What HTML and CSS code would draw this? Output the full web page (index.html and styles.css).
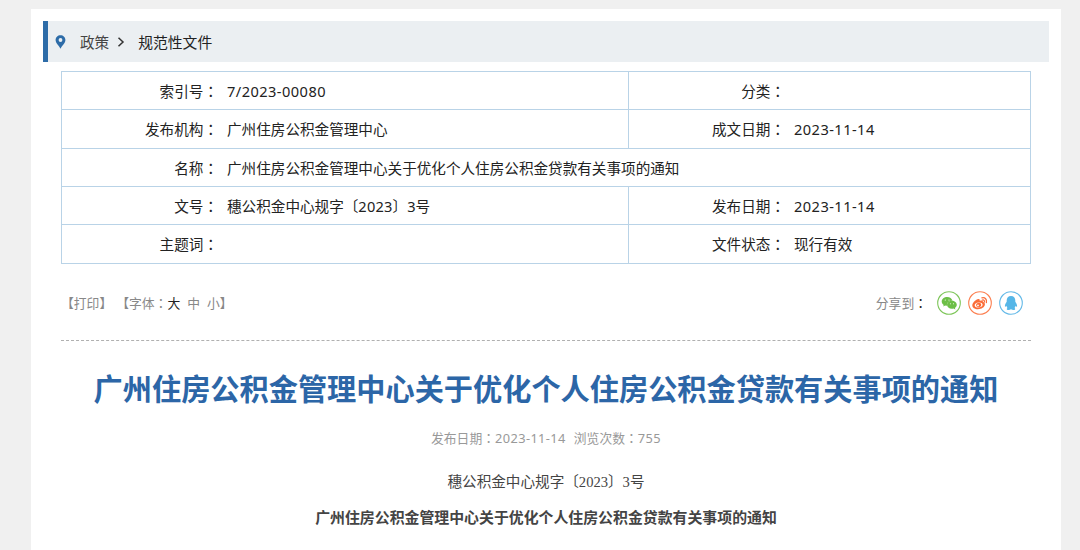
FILE: index.html
```
<!DOCTYPE html>
<html lang="zh-CN">
<head>
    <meta charset="UTF-8">
    <title>广州住房公积金管理中心关于优化个人住房公积金贷款有关事项的通知</title>
    <meta name="viewport" content="width=device-width, initial-scale=1.0">
    <link rel="stylesheet" href="styles.css">
</head>
<body>
    <div class="container">
        <div class="crumb">
            <svg class="pin" viewBox="0 0 10 14" width="11" height="14">
                <path fill="#2d6ca8" fill-rule="evenodd" d="M5 .3C2.200.3.1 2.400.1 5.100c0 3 3.100 5.400 4.900 8.600 1.800-3.200 4.900-5.600 4.900-8.600C9.900 2.400 7.800.3 5 .3zM5 3.100a1.900 1.900 0 1 1 0 3.800 1.900 1.900 0 0 1 0-3.800z"/>
            </svg>
            <a class="crumb-parent">政策</a>
            <svg class="arrow" viewBox="0 0 8 10" width="8" height="10">
                <path d="M1.500.8 6 5 1.500 9.200" fill="none" stroke="#333" stroke-width="1.500"/>
            </svg>
            <a class="crumb-current">规范性文件</a>
        </div>

        <table class="info">
            <colgroup>
                <col class="col-label"><col class="col-wide"><col class="col-label"><col>
            </colgroup>
            <tr>
                <th>索引号<i>：</i></th>
                <td class="num">7/2023-00080</td>
                <th class="split">分类<i>：</i></th>
                <td></td>
            </tr>
            <tr class="tall">
                <th>发布机构<i>：</i></th>
                <td>广州住房公积金管理中心</td>
                <th class="split">成文日期<i>：</i></th>
                <td class="num">2023-11-14</td>
            </tr>
            <tr>
                <th>名称<i>：</i></th>
                <td colspan="3">广州住房公积金管理中心关于优化个人住房公积金贷款有关事项的通知</td>
            </tr>
            <tr>
                <th>文号<i>：</i></th>
                <td>穗公积金中心规字〔<span class="year">2023</span>〕3号</td>
                <th class="split">发布日期<i>：</i></th>
                <td class="num">2023-11-14</td>
            </tr>
            <tr class="tall">
                <th>主题词<i>：</i></th>
                <td></td>
                <th class="split">文件状态<i>：</i></th>
                <td>现行有效</td>
            </tr>
        </table>

        <div class="tools">
            <div class="tools-left">
                <a class="print">【打印】</a>
                <span>【字体<i>：</i><a class="active">大</a><a class="size">中</a><a class="size">小</a>】</span>
            </div>
            <div class="share">
                <span>分享到<i class="dark">：</i></span>
                <svg class="icon" viewBox="0 0 24 24" width="24" height="24">
                    <circle cx="12" cy="12" r="11.300" fill="none" stroke="#7ec65a" stroke-width="1.100"/>
                    <path fill="#6dbf47" d="M10.200 5.900c-3.100 0-5.500 1.900-5.500 4.500 0 1.400.8 2.700 2 3.500l-.5 1.700 2-1c.6.2 1.100.2 1.700.2-.2-3.100 2-5.100 5.600-5.100-.6-2.200-2.700-3.800-5.300-3.800z"/>
                    <path fill="#6dbf47" d="M14.900 9.800c-2.900 0-4.900 1.800-4.900 4s2 4 4.900 4c.6 0 1.100-.1 1.600-.2l1.900 1-.5-1.700c1.200-.7 1.900-1.900 1.900-3.100 0-2.200-2.200-4-4.900-4z"/>
                    <g fill="#fff">
                        <circle cx="8.300" cy="9" r=".6"/>
                        <circle cx="12" cy="9" r=".6"/>
                        <circle cx="13.400" cy="12.700" r=".5"/>
                        <circle cx="16.500" cy="12.700" r=".5"/>
                    </g>
                </svg>
                <svg class="icon" viewBox="0 0 24 24" width="24" height="24">
                    <circle cx="12" cy="12" r="11.300" fill="none" stroke="#fc7f50" stroke-width="1.100"/>
                    <path fill="#fb6d39" fill-rule="evenodd" d="M10.400 8c1-.2 1.700.5 1.300 1.900 1.800-.8 3.600-.6 3.200 1.200 1.300.4 2.100 1.100 2 2.400-.2 2.700-3.400 4.700-6.900 4.700-3.300 0-5.800-1.600-5.700-4C4.400 11.800 7.900 8.300 10.400 8zM10.600 11.500c-2.400.2-4.100 1.400-3.900 2.900.2 1.500 2 2.400 4.200 2.100 2.300-.3 3.900-1.600 3.700-3-.2-1.300-1.800-2.200-4-2z"/>
                    <path fill="#fb6d39" fill-rule="evenodd" d="M10.800 11.700c1.700.1 2.700 1.200 2.400 2.600-.3 1.400-1.700 2.200-3.200 1.900-1.400-.3-2.200-1.400-1.800-2.600.4-1.200 1.400-1.900 2.600-1.900zM10 13.500a.9.9 0 1 0 0 1.800.9.9 0 0 0 0-1.800z"/>
                    <path d="M13.900 6.900c3-.9 5.400 1.600 4.500 4.700M14.400 9c1.400-.4 2.400.7 2 2" fill="none" stroke="#fb6d39" stroke-width="1.300" stroke-linecap="round"/>
                </svg>
                <svg class="icon" viewBox="0 0 24 24" width="24" height="24">
                    <circle cx="12" cy="12" r="11.300" fill="none" stroke="#65bae8" stroke-width="1.100"/>
                    <path fill="#56b6e7" d="M12 5c-2.800 0-4.300 2-4.300 4.500v1.300c-1.100 1.600-1.900 3.100-1.800 4.500.1.800.6.7 1.500-.5.2.9.500 1.500 1.100 2.100-1 .6-1.100 2 .5 2.100 1.100.1 2.200-.1 3-.7.800.6 1.900.8 3 .7 1.600-.1 1.500-1.500.5-2.100.6-.6.900-1.200 1.100-2.100.9 1.200 1.400 1.300 1.500.5.100-1.400-.7-2.900-1.800-4.500V9.500C16.300 7 14.800 5 12 5z"/>
                </svg>
            </div>
        </div>

        <h1>广州住房公积金管理中心关于优化个人住房公积金贷款有关事项的通知</h1>
        <div class="meta">
            <span>发布日期<i>：</i><b>2023-11-14</b></span>
            <span>浏览次数<i>：</i><b>755</b></span>
        </div>
        <div class="article">
            <p class="doc-no">穗公积金中心规字〔2023〕3号</p>
            <p class="doc-title">广州住房公积金管理中心关于优化个人住房公积金贷款有关事项的通知</p>
        </div>
    </div>
</body>
</html>
```
FILE: styles.css
```
/* 全局样式 */
* {
    box-sizing: border-box;
}
body {
    margin: 0;
    background: #f0f0f0;
    font-family: "Noto Sans", "Noto Sans CJK SC", sans-serif;
    font-size: 14.6px;
    color: #222;
    overflow: hidden;
}
/* 冒号居中显示 */
i {
    -webkit-locale: "zh-TW";
    font-family: "Noto Sans CJK TC", sans-serif;
    font-style: normal;
}
.container {
    width: 1030px;
    height: 541px;
    margin: 9px 0 0 31px;
    padding: 12px 12px 0;
    background: #fff;
}

/* 当前位置 */
.crumb {
    display: flex;
    align-items: center;
    height: 41px;
    padding-left: 7px;
    border-left: 5px solid #2d6ca8;
    background: #ebeff2;
}
.crumb .pin {
    margin-right: 14px;
}
.crumb-parent {
    color: #444;
}
.crumb .arrow {
    margin: 0 13px 0 8px;
}
.crumb-current {
    font-size: 14.8px;
}

/* 信息表格 */
.info {
    width: 970px;
    margin: 9px 0 0 18px;
    border-collapse: collapse;
    table-layout: fixed;
    line-height: 20px;
}
.col-label {
    width: 158px;
}
.col-wide {
    width: 409px;
}
.info tr {
    height: 38px;
    border: 1px solid #b9d3e7;
}
.info .tall {
    height: 39px;
}
.info th,
.info td {
    padding: 0;
    font-weight: normal;
    white-space: nowrap;
}
.info th {
    padding-right: 1.5px;
    text-align: right;
}
.info td {
    padding-left: 7.5px;
}
.info .split {
    border-left: 1px solid #b9d3e7;
}
.num {
    letter-spacing: 0.45px;
}
.year {
    letter-spacing: 0.2px;
}

/* 打印、字体、分享 */
.tools {
    display: flex;
    justify-content: space-between;
    align-items: center;
    width: 970px;
    height: 77px;
    margin-left: 18px;
    padding: 1px 8px 0 0;
    border-bottom: 1px dashed #b0b0b0;
    font-size: 12.8px;
    color: #888;
}
.tools-left {
    display: flex;
}
.print {
    margin-right: 4px;
}
.tools .active,
.tools .dark {
    color: #222;
}
.size {
    margin-left: 7px;
}
.share {
    display: flex;
    align-items: center;
}
.share .icon {
    margin-left: 7px;
}
.share span {
    margin-right: 3px;
}

/* 正文 */
h1 {
    margin: 27px 0 0;
    line-height: 42px;
    font-size: 29.2px;
    color: #2c66a7;
    text-align: center;
    white-space: nowrap;
}
.meta {
    display: flex;
    justify-content: center;
    gap: 8px;
    margin-top: 18px;
    line-height: 20px;
    font-size: 12.8px;
    color: #999;
}
.meta b {
    font-weight: normal;
    letter-spacing: 0.4px;
}
.article {
    margin-top: 17px;
    text-align: center;
    color: #444;
}
.article p {
    margin: 0;
    line-height: 35px;
}
.doc-no {
    font-family: "Liberation Serif", "Noto Sans CJK SC", serif;
}
.doc-title {
    font-size: 14.9px;
    font-weight: bold;
}
```
